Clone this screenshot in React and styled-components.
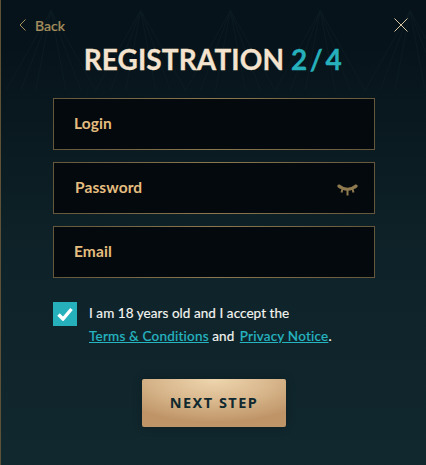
import React from "react";
import styled, { createGlobalStyle } from "styled-components";

const Global = createGlobalStyle`
  html, body { margin: 0; padding: 0; background: #0b1a20; }
  * { box-sizing: border-box; }
`;

const Modal = styled.div`
  position: relative;
  width: 426px;
  height: 465px;
  overflow: hidden;
  padding: 0 0 0 1px;
  font-family: Lato, "Open Sans", sans-serif;
  background: linear-gradient(180deg, #07131a 0%, #07131a 10%, #0e2329 55%, #11282e 100%);
  border-left: 1px solid #5d5138;
`;

const Pattern = styled.svg`
  position: absolute;
  inset: 0;
  width: 100%;
  height: 100%;
  pointer-events: none;
`;

const Content = styled.div`
  position: relative;
  display: flex;
  flex-direction: column;
  align-items: center;
`;

const TopBar = styled.div`
  align-self: stretch;
  display: flex;
  justify-content: space-between;
  align-items: center;
  padding: 15px 18px 0 17px;
  height: 35px;
`;

const BackLink = styled.a`
  display: flex;
  align-items: center;
  gap: 9px;
  color: #a58f5f;
  font-size: 14px;
  font-weight: 500;
  -webkit-text-stroke: 0.2px #a58f5f;
`;

const Close = styled.button`
  display: flex;
  padding: 0;
  border: 0;
  background: none;
`;

const Title = styled.h1`
  margin: 7px 0 0;
  font-size: 28px;
  line-height: 34px;
  font-weight: 700;
  color: #f3e3cf;
  letter-spacing: 0.1px;
  white-space: nowrap;
  -webkit-text-stroke: 0.3px currentColor;
`;

const Step = styled.span`
  color: #26b0bc;
  letter-spacing: 2.6px;
`;

const Fields = styled.div`
  margin-top: 22px;
  display: flex;
  flex-direction: column;
  gap: 12px;
`;

const Field = styled.div`
  width: 322px;
  height: 52px;
  display: flex;
  align-items: center;
  justify-content: space-between;
  padding: 0 16px 0 ${(p) => p.$inset}px;
  background: #03090c;
  border: 1px solid #65573a;
  border-image: linear-gradient(90deg, #65573a, #8c7850 50%, #65573a) 1;
`;

const Label = styled.span`
  color: #e5bd80;
  font-size: 15.5px;
  font-weight: 700;
  letter-spacing: 0.1px;
  padding-bottom: 2px;
`;

const EyeIcon = styled.svg`
  margin-top: 4px;
`;

const Agree = styled.label`
  width: 322px;
  margin-top: 24px;
  display: flex;
  align-items: flex-start;
  gap: 12px;
`;

const Box = styled.span`
  flex: none;
  width: 24px;
  height: 24px;
  display: flex;
  align-items: center;
  justify-content: center;
  background: #26b0bc;
`;

const AgreeText = styled.div`
  color: #f6f6f2;
  font-size: 13.5px;
  line-height: 23px;
  letter-spacing: 0.06px;
  white-space: nowrap;
  -webkit-text-stroke: 0.15px currentColor;
`;

const TextLink = styled.a`
  color: #26b4c0;
  font-weight: 500;
  letter-spacing: 0.2px;
  text-decoration: underline;

  & + & {
    margin-left: 2px;
  }
`;

const Next = styled.button`
  margin-top: 31px;
  width: 144px;
  height: 48px;
  border: 0;
  border-radius: 2px;
  color: #10292f;
  font-family: "Noto Sans", sans-serif;
  font-size: 14.5px;
  font-weight: 700;
  letter-spacing: 1.5px;
  padding: 0 0 2px;
  background: radial-gradient(ellipse 75% 90% at 50% 0%, #eed6ae 0%, #d8b68c 55%, #bf9568 100%);
  box-shadow: 0 0 10px rgba(0, 0, 0, 0.25);
`;

const beams = Array.from({ length: 5 }, (_, i) => i * 90 + 5);

export default function App() {
  return (
    <Modal>
      <Global />
      <Pattern viewBox="0 0 426 465" aria-hidden="true">
        <g stroke="#12252b" strokeWidth="1" fill="none" opacity="0.4">
          {beams.map((x) => (
            <path
              key={x}
              d={`M${x} 90 L${x + 45} 10 L${x + 90} 90 M${x + 15} 90 L${x + 45} 10 L${x + 75} 90 M${x + 30} 90 L${x + 45} 10 L${x + 60} 90`}
            />
          ))}
        </g>
      </Pattern>
      <Content>
        <TopBar>
          <BackLink>
            <svg width="7" height="12" viewBox="0 0 7 12" fill="none" stroke="#a58f5f" strokeWidth="1">
              <path d="M6.5 0.5 L1 6 L6.5 11.5" />
            </svg>
            Back
          </BackLink>
          <Close aria-label="Close">
            <svg width="14" height="14" viewBox="0 0 14 14" fill="none" stroke="#d8c7a0" strokeWidth="1">
              <path d="M0.5 0.5 L13.5 13.5 M13.5 0.5 L0.5 13.5" />
            </svg>
          </Close>
        </TopBar>
        <Title>
          REGISTRATION <Step>2/4</Step>
        </Title>
        <Fields>
          <Field $inset={20}>
            <Label>Login</Label>
          </Field>
          <Field $inset={21}>
            <Label>Password</Label>
            <EyeIcon width="21" height="12" viewBox="0 0 21 12" fill="none" stroke="#8f7a50" strokeWidth="2">
              <path d="M1.2 1.5 Q10.5 9 19.8 1.5" strokeWidth="3" />
              <path d="M1 1 L3 4 M20 1 L18 4 M5.5 5 L4.5 8.5 M15.5 5 L16.5 8.5 M10.5 6 L10.5 11.5" />
            </EyeIcon>
          </Field>
          <Field $inset={20}>
            <Label>Email</Label>
          </Field>
        </Fields>
        <Agree>
          <Box>
            <svg width="16" height="14" viewBox="0 0 16 14" fill="none" stroke="#fff" strokeWidth="3.4">
              <path d="M1.5 7.5 L6 12 L14.5 2" />
            </svg>
          </Box>
          <AgreeText>
            I am 18 years old and I accept the
            <br />
            <TextLink>Terms &amp; Conditions</TextLink> and <TextLink>Privacy Notice</TextLink>.
          </AgreeText>
        </Agree>
        <Next>NEXT STEP</Next>
      </Content>
    </Modal>
  );
}
